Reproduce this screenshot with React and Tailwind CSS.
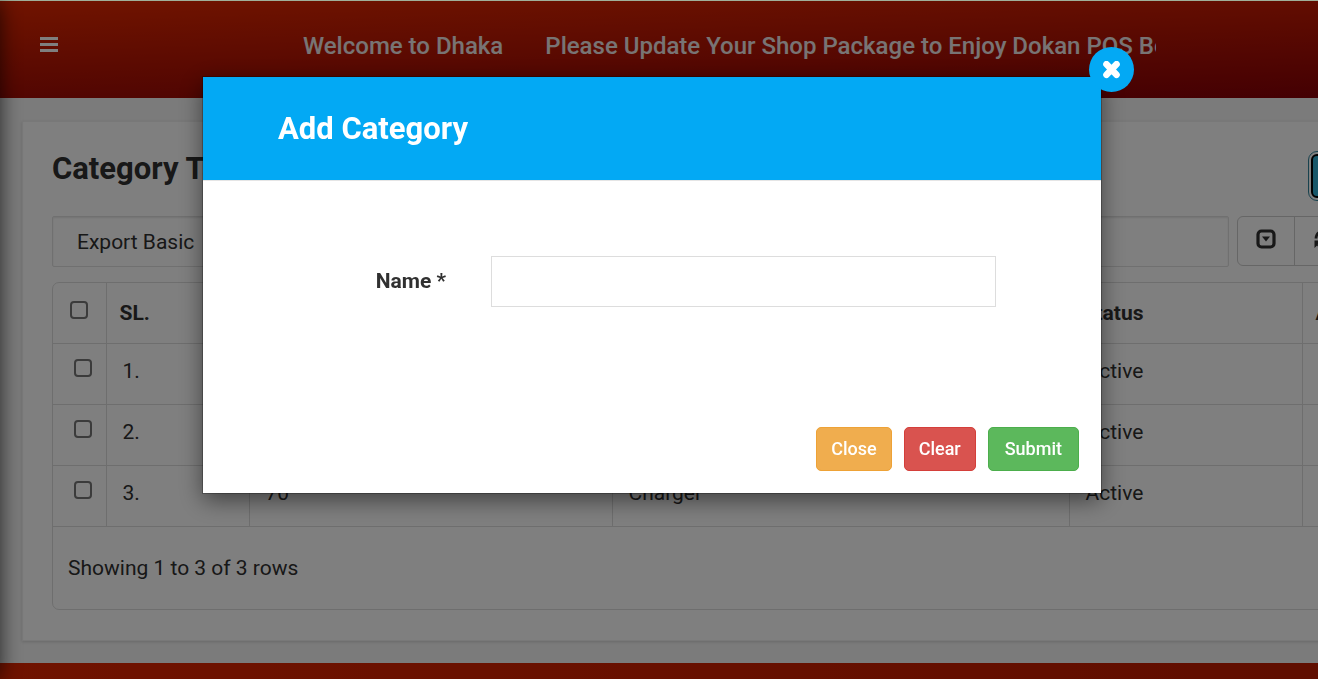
import React from "react";

const rows = [
  { sl: "1.", id: "", name: "", status: "Active" },
  { sl: "2.", id: "", name: "", status: "Active" },
  { sl: "3.", id: "70", name: "Charger", status: "Active" },
];

const checkbox =
  "block size-[18px] appearance-none rounded-[4px] border-2 border-[#767676] bg-white";

function MenuIcon() {
  return (
    <svg width="18" height="15" viewBox="0 0 18 15" fill="currentColor" aria-hidden="true">
      <path d="M0 0h18v3H0zM0 6h18v3H0zM0 12h18v3H0z" />
    </svg>
  );
}

function CloseIcon() {
  return (
    <svg width="18" height="18" viewBox="0 0 18 18" fill="none" stroke="currentColor" strokeWidth="6.6" strokeLinecap="round" aria-hidden="true">
      <path d="M3.500 3.200l10 10.600M13.500 3.200L3.500 13.800" />
    </svg>
  );
}

function ToggleIcon() {
  return (
    <svg width="20" height="20" viewBox="0 0 20 20" aria-hidden="true">
      <rect x="2" y="2" width="16" height="16" rx="3.500" fill="none" stroke="currentColor" strokeWidth="3.2" />
      <path d="M6 7.500h8l-4 5z" fill="currentColor" />
    </svg>
  );
}

function RefreshIcon() {
  return (
    <svg width="20" height="20" viewBox="0 0 20 20" aria-hidden="true">
      <path d="M2 9.500A8 8 0 0 1 16 4.500M18 10.500A8 8 0 0 1 4 15.500" fill="none" stroke="currentColor" strokeWidth="2.800" />
      <path d="M19.500 1v7.500H12zM0.500 19v-7.500H8z" fill="currentColor" />
    </svg>
  );
}

function CategoryTable() {
  return (
    <div className="rounded-[7px] border border-[#ddd]">
      <table className="w-full table-fixed border-collapse text-left">
        <colgroup>
          <col className="w-[53px]" />
          <col className="w-[143px]" />
          <col className="w-[363px]" />
          <col className="w-[457px]" />
          <col className="w-[233px]" />
          <col />
        </colgroup>
        <thead>
          <tr className="h-[60px] border-b border-[#ddd]">
            <th className="pb-[6px] pl-[17px]">
              <input type="checkbox" aria-label="Select all rows" className={checkbox} />
            </th>
            <th className="border-l border-[#ddd] px-[13px]">SL.</th>
            <th className="border-l border-[#ddd] px-[13px]">ID</th>
            <th className="border-l border-[#ddd] px-[13px]">Name</th>
            <th className="border-l border-[#ddd] px-[13px]">Status</th>
            <th className="border-l border-[#ddd] px-[13px]">Action</th>
          </tr>
        </thead>
        <tbody>
          {rows.map((row) => (
            <tr key={row.sl} className="h-[61px] border-b border-[#ddd]">
              <td className="pb-3 pl-[21px]">
                <input type="checkbox" aria-label={"Select row " + row.sl} className={checkbox} />
              </td>
              <td className="border-l border-[#ddd] px-4 pb-[6px]">{row.sl}</td>
              <td className="border-l border-[#ddd] px-4 pb-[6px]">{row.id}</td>
              <td className="border-l border-[#ddd] px-4 pb-[6px]">{row.name}</td>
              <td className="border-l border-[#ddd] px-4 pb-[6px]">{row.status}</td>
              <td className="border-l border-[#ddd] px-4 pb-[6px]"></td>
            </tr>
          ))}
        </tbody>
      </table>
      <p className="px-[15px] py-[26px]">Showing 1 to 3 of 3 rows</p>
    </div>
  );
}

function CategoryDialog() {
  return (
    <div className="fixed inset-x-0 top-px bottom-0 flex items-start justify-center bg-black/50 pt-[76px] pr-[14px]">
      <form
        role="dialog"
        aria-labelledby="dialog-title"
        className="relative w-[898px] max-w-full bg-white shadow-[0_7px_22px_rgba(0,0,0,0.5),0_0_0_1px_rgba(0,0,0,0.25)]"
      >
        <button
          type="button"
          aria-label="Close dialog"
          className="absolute -top-[30px] -right-[33px] flex size-[45px] items-center justify-center rounded-full bg-[#03a9f4] text-white"
        >
          <CloseIcon />
        </button>
        <header className="flex h-[104px] items-center border-b border-[#e5e5e5] bg-[#03a9f4] px-[75px]">
          <h2 id="dialog-title" className="text-[31px] font-bold text-white">Add Category</h2>
        </header>
        <div className="flex items-center pt-[75px] pr-[105px] pb-[120px]">
          <label htmlFor="category-name" className="w-[243px] pb-[2px] text-right text-[21px] font-bold">
            Name *
          </label>
          <input id="category-name" type="text" className="ml-[45px] h-[51px] min-w-0 flex-1 border border-[#ddd] px-4 outline-none" />
        </div>
        <footer className="flex justify-end gap-3 px-[22px] pb-[22px] text-[18px] font-medium text-white">
          <button type="button" className="h-11 rounded-[5px] border border-[#eea236] bg-[#f0ad4e] px-[14px]">Close</button>
          <button type="reset" className="h-11 rounded-[5px] border border-[#d43f3a] bg-[#d9534f] px-[14px]">Clear</button>
          <button type="button" className="h-11 rounded-[5px] border border-[#4cae4c] bg-[#5cb85c] px-4">Submit</button>
        </footer>
      </form>
    </div>
  );
}

export default function App() {
  return (
    <div className="flex h-screen flex-col overflow-hidden border-t border-[#a0b09a] bg-[#f6f6f6] font-['Roboto',sans-serif] text-[21px] leading-[30px] text-[#303030]">
      <header className="flex h-[97px] shrink-0 items-center bg-[linear-gradient(178deg,#e22800_0%,#880006_100%)] px-10 pb-2 text-white">
        <button type="button" aria-label="Toggle menu" className="pb-[2px]"><MenuIcon /></button>
        <div className="mr-[122px] ml-[245px] flex min-w-0 flex-1 gap-[42px] overflow-hidden text-[24px] font-medium whitespace-nowrap text-[#f0e8e8]">
          <span>Welcome to Dhaka</span>
          <span>Please Update Your Shop Package to Enjoy Dokan POS Best Service</span>
        </div>
      </header>
      <main className="min-h-0 flex-1 pt-[23px] pl-[22px]">
        <section className="w-[1420px] border border-[#f0f0f0] bg-white px-[29px] pt-[29px] pb-[30px] shadow-[0_1px_3px_rgba(0,0,0,0.15)]">
          <div className="flex h-[50px] items-center gap-4">
            <h1 className="w-[1243px] pb-[14px] text-[31px] font-bold">Category Table</h1>
            <button type="button" className="h-11 w-24 rounded-md border-2 border-black bg-[#31b0d5] outline-1 outline-offset-2 outline-[#31859c]">Add</button>
          </div>
          <div className="mt-[15px] flex gap-2">
            <select aria-label="Export type" className="h-[51px] w-[1177px] appearance-none rounded-[2px] border border-[#e0e0e0] px-6 shadow-[inset_0_1px_2px_rgba(0,0,0,0.1)]">
              <option>Export Basic</option>
            </select>
            <div className="flex h-[50px] rounded-md border border-[#ccc]">
              <button type="button" aria-label="Toggle view" className="flex w-[57px] items-center justify-center border-r border-[#ccc] pb-1"><ToggleIcon /></button>
              <button type="button" aria-label="Refresh" className="flex w-[57px] items-center justify-center pb-1"><RefreshIcon /></button>
            </div>
          </div>
          <div className="mt-[15px]">
            <CategoryTable />
          </div>
        </section>
      </main>
      <footer className="h-4 shrink-0 bg-[linear-gradient(90deg,#e02600,#c01c00)]"></footer>
      <aside aria-hidden="true" className="fixed top-px bottom-0 -left-60 w-60 shadow-[0_0_20px_rgba(0,0,0,0.7)]"></aside>
      <CategoryDialog />
    </div>
  );
}
